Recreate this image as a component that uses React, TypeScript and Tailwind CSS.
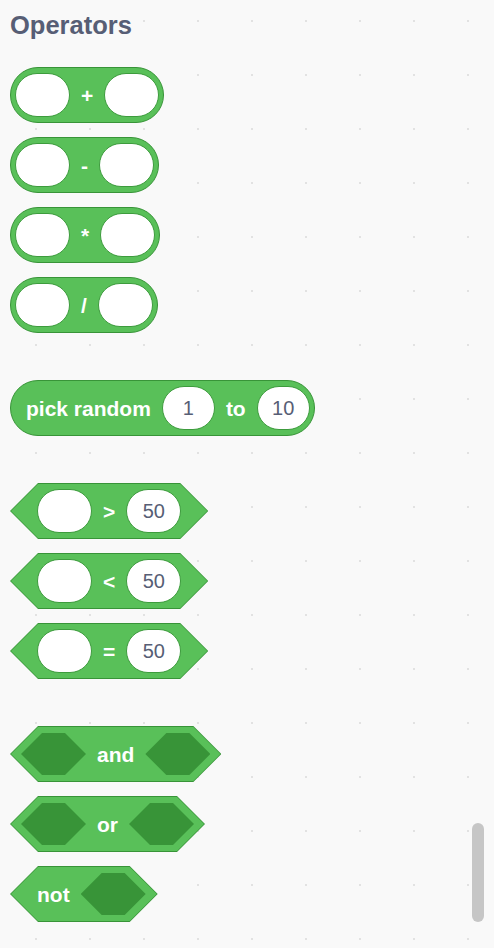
import React from 'react';

const font = "font-['Liberation_Sans',Arial,sans-serif]";

const Slot = ({ value = '', narrow = false }: { value?: string; narrow?: boolean }) => (
  <div
    className={`flex h-[44px] items-center justify-center rounded-full border border-[#3d9b3d] bg-white px-[12px] text-[20px] text-[#575e75] ${
      narrow ? 'min-w-[53px]' : 'min-w-[55px]'
    }`}
  >
    {value}
  </div>
);

const Label = ({ children }: { children: React.ReactNode }) => (
  <span className="text-[21px] font-bold leading-none text-white">{children}</span>
);

const BoolSlot = () => (
  <div className="h-[42px] w-[65px] bg-[#389438] [clip-path:polygon(21px_0,calc(100%_-_21px)_0,100%_50%,calc(100%_-_21px)_100%,21px_100%,0_50%)]" />
);

const Reporter = ({ children, className = '' }: { children: React.ReactNode; className?: string }) => (
  <div className={`flex h-[56px] items-center gap-[11px] rounded-full border border-[#389438] bg-[#59c059] ${className}`}>
    {children}
  </div>
);

const Hex = ({ children, className = '' }: { children: React.ReactNode; className?: string }) => (
  <div className="relative flex h-[56px] items-center">
    <div className="absolute inset-0 bg-[#389438] [clip-path:polygon(28px_0,calc(100%_-_28px)_0,100%_50%,calc(100%_-_28px)_100%,28px_100%,0_50%)]" />
    <div className="absolute inset-[1px] bg-[#59c059] [clip-path:polygon(27px_0,calc(100%_-_27px)_0,100%_50%,calc(100%_-_27px)_100%,27px_100%,0_50%)]" />
    <div className={`relative flex items-center gap-[11px] ${className}`}>{children}</div>
  </div>
);

export default function App() {
  return (
    <div
      className={`relative h-[948px] w-full overflow-hidden bg-[#f9f9f9] bg-[radial-gradient(circle,#e2e2e2_1px,transparent_1.5px)] bg-[length:54px_54px] bg-[position:9px_48px] ${font}`}
    >
      <div className="flex flex-col items-start pl-[10px] pt-[10px]">
        <h2 className="mb-[27px] text-[25.5px] font-bold leading-[30px] text-[#575e75]">Operators</h2>

        <div className="flex flex-col items-start gap-[47px]">
          {/* arithmetic */}
          <div className="flex flex-col items-start gap-[14px]">
            {['+', '-', '*', '/'].map((op) => (
              <Reporter key={op} className="px-[4px]">
                <Slot />
                <Label>{op}</Label>
                <Slot />
              </Reporter>
            ))}
          </div>

          <Reporter className="pl-[15px] pr-[4px]">
            <Label>pick random</Label>
            <Slot value="1" narrow />
            <Label>to</Label>
            <Slot value="10" narrow />
          </Reporter>

          {/* comparisons */}
          <div className="flex flex-col items-start gap-[14px]">
            {['>', '<', '='].map((op) => (
              <Hex key={op} className="px-[27px]">
                <Slot />
                <Label>{op}</Label>
                <Slot value="50" />
              </Hex>
            ))}
          </div>

          {/* boolean */}
          <div className="flex flex-col items-start gap-[14px]">
            <Hex className="px-[11px]">
              <BoolSlot />
              <Label>and</Label>
              <BoolSlot />
            </Hex>
            <Hex className="px-[11px]">
              <BoolSlot />
              <Label>or</Label>
              <BoolSlot />
            </Hex>
            <Hex className="pl-[27px] pr-[12px]">
              <Label>not</Label>
              <BoolSlot />
            </Hex>
          </div>
        </div>
      </div>

      {/* scrollbar */}
      <div className="absolute left-[472px] top-[823px] h-[99px] w-[12px] rounded-full bg-[#c6c6c6]" />
    </div>
  );
}
